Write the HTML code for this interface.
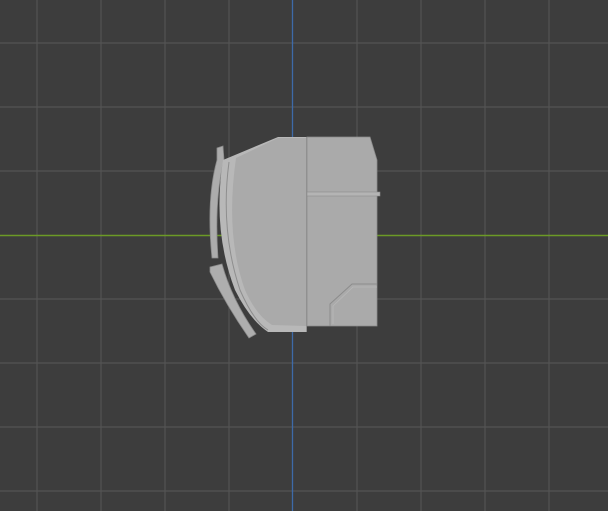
<!DOCTYPE html>
<html><head><style>html,body{margin:0;padding:0;background:#3d3d3d;overflow:hidden}</style></head>
<body>
<svg width="608" height="511" viewBox="0 0 608 511" xmlns="http://www.w3.org/2000/svg" style="display:block">
<rect width="608" height="511" fill="#3d3d3d"/>
<g stroke="#545454" stroke-width="1.2">
<line x1="37" y1="0" x2="37" y2="511"/><line x1="101" y1="0" x2="101" y2="511"/><line x1="165" y1="0" x2="165" y2="511"/><line x1="229" y1="0" x2="229" y2="511"/><line x1="357" y1="0" x2="357" y2="511"/><line x1="421" y1="0" x2="421" y2="511"/><line x1="485" y1="0" x2="485" y2="511"/><line x1="549" y1="0" x2="549" y2="511"/>
<line x1="0" y1="43" x2="608" y2="43"/><line x1="0" y1="107" x2="608" y2="107"/><line x1="0" y1="171" x2="608" y2="171"/><line x1="0" y1="299" x2="608" y2="299"/><line x1="0" y1="363" x2="608" y2="363"/><line x1="0" y1="427" x2="608" y2="427"/><line x1="0" y1="491" x2="608" y2="491"/>
</g>
<line x1="0" y1="235.5" x2="608" y2="235.5" stroke="#6c9a26" stroke-width="1.5"/>
<line x1="292.5" y1="0" x2="292.5" y2="511" stroke="#3e6aa8" stroke-width="1.3"/>
<path d="M217,148 L223,146 L224,160 Q214,200 218,258 L212,258 Q206,200 217,160 Z" fill="#acacac" stroke="#8a8a8a" stroke-width="0.8"/>
<path d="M210,267 L222,264 Q232,300 256,334 L249,338 Q226,305 210,272 Z" fill="#aeaeae" stroke="#8a8a8a" stroke-width="0.8"/>
<path d="M223,160 L278,137 L307,137 L307,332 L268,332 Q250,320 235,290 Q212,230 223,160 Z" fill="#b8b8b8"/>
<path d="M236,158 L278,138 L306,138 L306,326 L272,325 Q256,315 245,290 Q225,235 236,158 Z" fill="#aaaaaa"/>
<path d="M229,162 Q220,230 240,290 Q254,322 268,330" fill="none" stroke="#8e8e8e" stroke-width="1"/>
<path d="M307,137 L370,137 L377,160 L377,326 L307,326 Z" fill="#aaaaaa" stroke="#8c8c8c" stroke-width="0.8"/>
<rect x="307" y="192" width="73" height="4" fill="#b4b4b4" stroke="#8c8c8c" stroke-width="0.6"/>
<path d="M330,326 L330,304 L352,284 L377,284" fill="none" stroke="#8c8c8c" stroke-width="1"/>
<path d="M333,324 L333,306 L353,287 L377,287" fill="none" stroke="#b8b8b8" stroke-width="0.8"/>
<line x1="306.5" y1="137" x2="306.5" y2="332" stroke="#909090" stroke-width="1"/>
</svg>
</body></html>
